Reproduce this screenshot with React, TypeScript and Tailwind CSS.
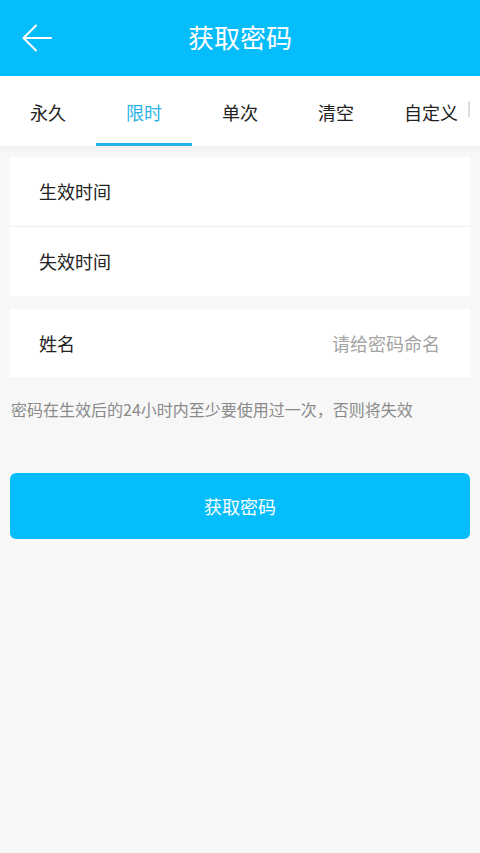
import React from 'react';

const tabs = ['永久', '限时', '单次', '清空', '自定义'];

const App: React.FC = () => {
  const active = 1;
  return (
    <div className="w-[480px] h-[853px] bg-[#f7f7f7] font-['Noto_Sans_CJK_SC',sans-serif] flex flex-col">
      {/* Header */}
      <div className="h-[76px] bg-[#06bdfb] flex items-center relative">
        <svg className="absolute left-[22px] top-[24px]" width="30" height="28" viewBox="0 0 30 28" fill="none">
          <path d="M29 14H2M14 1.5L1.5 14L14 26.5" stroke="white" strokeWidth="2" strokeLinecap="round" strokeLinejoin="round" />
        </svg>
        <div className="w-full text-center text-white text-[26px] leading-none pb-[2px]">获取密码</div>
      </div>

      {/* Tabs */}
      <div className="h-[70px] bg-white flex relative shadow-[0_2px_6px_rgba(0,0,0,0.04)]">
        {tabs.map((t, i) => (
          <div key={t} className="w-[96px] h-full flex items-center justify-center relative">
            <span className={`text-[18px] leading-none mt-[2px] ${i === active ? 'text-[#29b3e4]' : 'text-[#222]'} ${i === 4 ? 'ml-[-2px]' : ''}`}>{t}</span>
            {i === active && <div className="absolute bottom-[0px] left-0 w-[96px] h-[3px] bg-[#1eb6ea]" />}
          </div>
        ))}
        <div className="absolute left-[468px] top-[25px] w-[2px] h-[16px] bg-[#ddd]" />
      </div>

      {/* Time card */}
      <div className="mx-[10px] mt-[11px] bg-white flex flex-col">
        <div className="h-[70px] flex items-center pl-[29px] text-[18px] text-[#222] border-b border-[#eeeeee]">生效时间</div>
        <div className="h-[69px] flex items-center pl-[29px] text-[18px] text-[#222]">失效时间</div>
      </div>

      {/* Name card */}
      <div className="mx-[10px] mt-[13px] h-[68px] bg-white flex items-center justify-between pl-[29px] pr-[30px]">
        <span className="text-[18px] text-[#222]">姓名</span>
        <span className="text-[18px] text-[#a3a3a3]">请给密码命名</span>
      </div>

      <div className="mt-[24px] pl-[11px] text-[16px] text-[#8a8a8a] leading-none">密码在生效后的24小时内至少要使用过一次，否则将失效</div>

      <button className="mx-[10px] mt-[56px] h-[66px] rounded-[6px] bg-[#06bdfb] text-white text-[18px]">获取密码</button>
    </div>
  );
};

export default App;
